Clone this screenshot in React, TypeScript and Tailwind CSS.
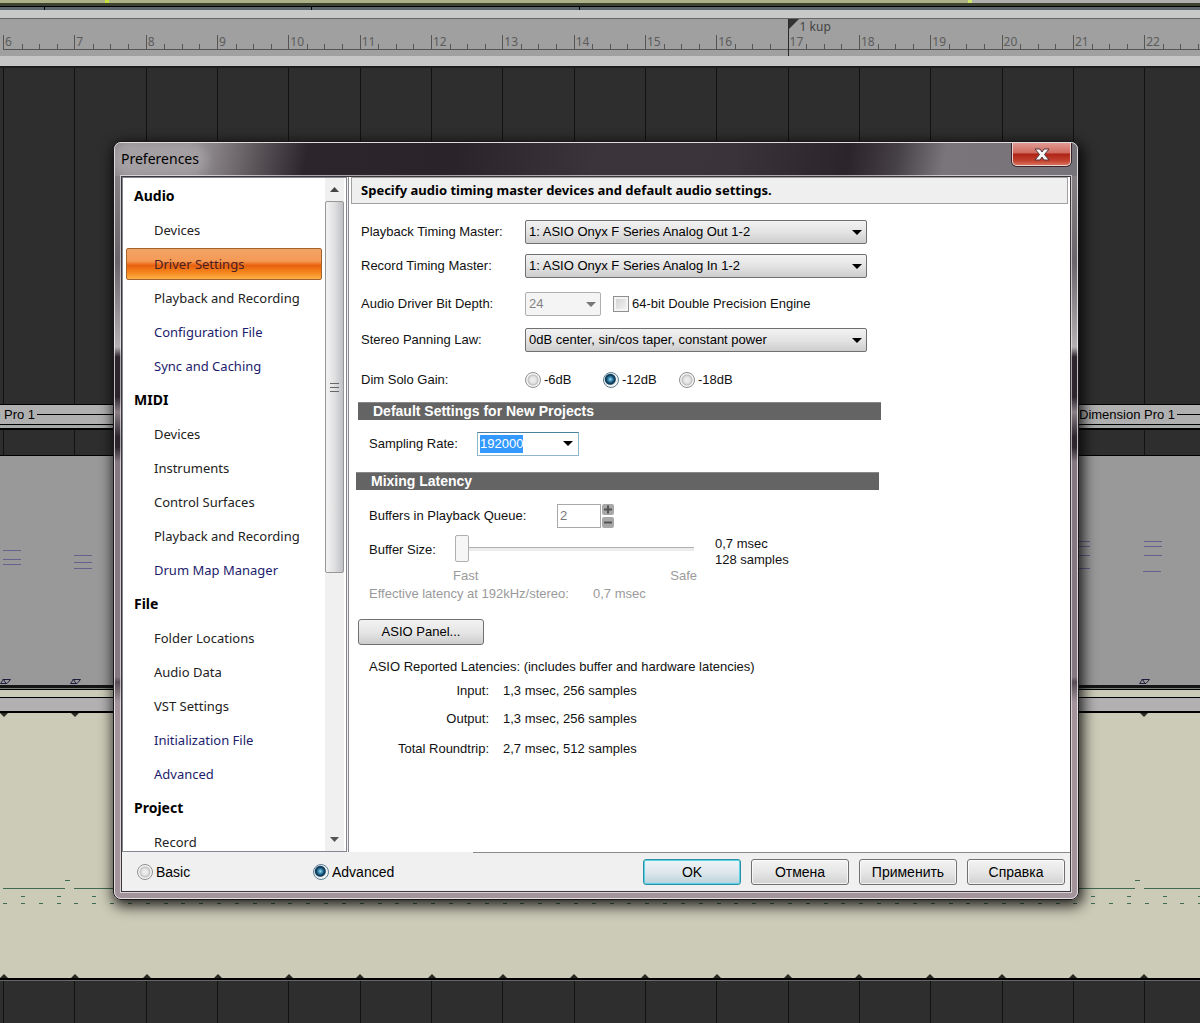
import { useEffect, useRef } from 'react'
import type { ReactNode } from 'react'
import { clsx } from 'clsx'

const measures = [6, 7, 8, 9, 10, 11, 12, 13, 14, 15, 16, 17, 18, 19, 20, 21, 22]

type NavEntry = { label: string; kind?: 'heading' | 'link' | 'active' }

const nav: NavEntry[] = [
  { label: 'Audio', kind: 'heading' },
  { label: 'Devices' },
  { label: 'Driver Settings', kind: 'active' },
  { label: 'Playback and Recording' },
  { label: 'Configuration File', kind: 'link' },
  { label: 'Sync and Caching', kind: 'link' },
  { label: 'MIDI', kind: 'heading' },
  { label: 'Devices' },
  { label: 'Instruments' },
  { label: 'Control Surfaces' },
  { label: 'Playback and Recording' },
  { label: 'Drum Map Manager', kind: 'link' },
  { label: 'File', kind: 'heading' },
  { label: 'Folder Locations' },
  { label: 'Audio Data' },
  { label: 'VST Settings' },
  { label: 'Initialization File', kind: 'link' },
  { label: 'Advanced', kind: 'link' },
  { label: 'Project', kind: 'heading' },
  { label: 'Record' },
]

/* ---------- timeline behind the dialog ---------- */

function Grid({ className }: { className: string }) {
  return (
    <div className={clsx('flex overflow-hidden bg-[#2e2e2e] pl-[3px]', className)}>
      {measures.map((m) => (
        <div key={m} className="w-[5.96%] shrink-0 border-l border-[#121212]" />
      ))}
    </div>
  )
}

function Ruler() {
  return (
    <div className="flex h-[37px] overflow-hidden bg-[#a0a0a0] pl-[3px]">
      {measures.map((m) => (
        <div key={m} className="relative w-[5.96%] shrink-0">
          {m === 17 && (
            <div className="absolute top-0 left-0 flex h-[37px] border-l border-[#2a2a2a]">
              <svg width="10" height="10" aria-hidden="true">
                <path d="M0 0H10L0 10Z" fill="#333" />
              </svg>
              <span className="pl-px text-xs whitespace-nowrap text-[#444]">1 kup</span>
            </div>
          )}
          <div className="mt-4 flex h-[15px] items-end border-b border-[#555]">
            <div className="h-3.5 flex-1 border-l border-[#555] pl-px text-xs leading-[14px] text-[#5c5c5c]">{m}</div>
            <div className="h-[5px] flex-1 border-l border-[#555]" />
            <div className="h-[5px] flex-1 border-l border-[#555]" />
            <div className="h-[5px] flex-1 border-l border-[#555]" />
          </div>
        </div>
      ))}
    </div>
  )
}

function Notches({ up }: { up?: boolean }) {
  return (
    <div className="flex h-1 overflow-hidden">
      {measures.map((m) => (
        <div key={m} className="w-[5.94%] shrink-0">
          <svg width="9" height="4" aria-hidden="true" className="block">
            <path d={up ? 'M0 4L4 0L8 4Z' : 'M0 0H8L4 4Z'} fill="#2a2a22" />
          </svg>
        </div>
      ))}
    </div>
  )
}

function MidiNotes() {
  const notes = [
    [3, 94], [3, 103], [3, 108],
    [74, 99], [74, 106], [74, 112],
    [1072, 85], [1072, 90], [1072, 99], [1072, 112],
    [1144, 85], [1144, 90], [1144, 99], [1143, 115],
  ]
  return (
    <svg className="block h-[229px] w-full bg-[#999]" aria-hidden="true">
      {notes.map(([x, y]) => (
        <rect key={`${x}-${y}`} x={x} y={y} width="18" height="1" fill="#62628c" />
      ))}
      {[0, 70, 1139].map((x) => (
        <path
          key={x}
          transform={`translate(${x} 223)`}
          d="M2.500 0.500H10.500L7 4.500H0.500L3.500 0.500L6 4.500"
          fill="none"
          stroke="#1c1c3c"
        />
      ))}
    </svg>
  )
}

function DrumHits() {
  const hits = Array.from({ length: 68 }, (_, i) => 3 + Math.round(i * 17.84))
  return (
    <svg className="block h-8 w-full" aria-hidden="true" fill="#3f6a52">
      <rect x="3" y="10" width="62" height="1" />
      <rect x="65" y="2" width="5" height="1" />
      <rect x="74" y="10" width="1061" height="1" />
      <rect x="1135" y="2" width="5" height="1" />
      <rect x="1144" y="10" width="800" height="1" />
      {hits.map((x, i) => (
        <g key={x}>
          <rect x={x} y="25" width="4" height="1" />
          {i % 2 === 1 && <rect x={x} y="18" width="4" height="1" />}
        </g>
      ))}
    </svg>
  )
}

function Timeline() {
  return (
    <div className="flex min-h-screen flex-col overflow-hidden bg-[#2e2e2e] font-['Noto_Sans',sans-serif]">
      <div className="flex h-[3px] bg-[#b0b0b0]">
        <div className="flex w-[81%] justify-between bg-[#acb188] pl-[105px]">
          <div className="w-1 bg-[#c4e03a]" />
          <div className="w-1 bg-[#d0e66a]" />
        </div>
      </div>
      <div className="h-[3px] bg-[#3d4230]" />
      <div className="h-px bg-black" />
      <div className="flex h-[3px] bg-[#5b676c] pl-[44px]">
        <div className="w-[23.2%] border-x border-black" />
        <div className="w-[23.2%] border-r border-black" />
      </div>
      <div className="h-2 bg-[#c8c8c8]" />
      <div className="h-px bg-[#666]" />
      <Ruler />
      <div className="h-[10px] bg-[#c6c6c6]" />
      <div className="h-0.5 bg-[#1c1c1c]" />
      <Grid className="h-[336px]" />
      <div className="flex h-[21px] items-center overflow-hidden border-y border-black bg-[#b0b0b0] font-['Liberation_Sans',sans-serif] text-[13px] text-black">
        {[0, 1].map((i) => (
          <div key={i} className={clsx('flex w-[95%] shrink-0 items-center gap-0.5', i === 0 && '-ml-[61px]')}>
            <span>Dimension Pro 1</span>
            <span className="h-px flex-1 bg-black" />
          </div>
        ))}
      </div>
      <div className="h-[3px] bg-[#a6aaa6]" />
      <div className="h-0.5 bg-black" />
      <Grid className="h-[25px]" />
      <div className="h-px bg-black" />
      <MidiNotes />
      <div className="h-[3px] bg-[#141414]" />
      <div className="h-px bg-[#7a8278]" />
      <div className="h-px bg-black" />
      <div className="h-[7px] bg-[#cccbb8]" />
      <div className="h-px bg-black" />
      <div className="h-[13px] bg-[#b2b0b0]" />
      <div className="h-0.5 bg-black" />
      <div className="flex h-[265px] flex-col justify-between bg-[#cccbb8]">
        <Notches />
        <div className="mt-24">
          <DrumHits />
        </div>
        <Notches up />
      </div>
      <div className="h-0.5 bg-black" />
      <div className="h-px bg-[#666]" />
      <Grid className="min-h-[42px] flex-1" />
    </div>
  )
}

/* ---------- form controls ---------- */

function Arrow({ className }: { className?: string }) {
  return (
    <svg width="10" height="5" viewBox="0 0 10 5" aria-hidden="true" className={className}>
      <path d="M0 0H10L5 5Z" fill="currentColor" />
    </svg>
  )
}

function Select({ id, value, disabled, className }: { id: string; value: string; disabled?: boolean; className: string }) {
  return (
    <div className={clsx('grid items-center', className)}>
      <select
        id={id}
        disabled={disabled}
        className="col-start-1 row-start-1 h-6 w-full appearance-none rounded-xs border border-[#707070] bg-linear-to-b from-[#f2f2f2] via-[#e4e4e4] to-[#cdcdcd] pl-[3px] text-[13px] text-black disabled:border-[#b0b0b0] disabled:bg-none disabled:bg-[#f4f4f4] disabled:text-[#838383] disabled:opacity-100"
      >
        <option>{value}</option>
      </select>
      <Arrow
        className={clsx(
          'pointer-events-none col-start-1 row-start-1 mr-[5px] justify-self-end',
          disabled ? 'text-[#777]' : 'text-black'
        )}
      />
    </div>
  )
}

function Radio({ name, label, checked, className }: { name: string; label: string; checked?: boolean; className?: string }) {
  return (
    <label className={clsx('flex items-center gap-[3px]', className)}>
      <input
        type="radio"
        name={name}
        defaultChecked={checked}
        className="size-4 shrink-0 appearance-none rounded-full border border-[#8e8f8f] bg-[radial-gradient(circle_at_50%_50%,#ececec_2px,#d8d8d8_4px,#bdbdbd_5px,#f6f6f6_6px)] checked:border-[#5d7f93] checked:bg-[radial-gradient(circle_at_45%_45%,#a8dcf0_0px,#3d8fb8_2px,#12405e_4px,#12405e_5px,#f2f2f2_6px)]"
      />
      {label}
    </label>
  )
}

function Row({ id, label, className, children }: { id: string; label: string; className?: string; children: ReactNode }) {
  return (
    <div className={clsx('flex items-center pl-[10px]', className)}>
      <label htmlFor={id} className="w-[164px] shrink-0">
        {label}
      </label>
      {children}
    </div>
  )
}

function SectionBar({ className, children }: { className: string; children: ReactNode }) {
  return (
    <h2
      className={clsx(
        'h-[18px] w-[523px] border-t border-[#888] bg-[#646464] pl-[15px] text-sm leading-[17px] font-bold text-white',
        className
      )}
    >
      {children}
    </h2>
  )
}

function DialogButton({ primary, children }: { primary?: boolean; children: ReactNode }) {
  return (
    <button
      type="button"
      className={clsx(
        'h-[26px] w-[98px] rounded-[3px] border bg-linear-to-b text-sm text-black',
        primary
          ? 'border-[#2f8fa3] from-[#eef4f6] via-[#dfe8ec] to-[#b9d3dd] inset-ring inset-ring-[#57d3ea]'
          : 'border-[#707070] from-[#f3f3f3] via-[#e6e6e6] to-[#d2d2d2] inset-ring inset-ring-white/70'
      )}
    >
      {children}
    </button>
  )
}

/* ---------- dialog ---------- */

function TitleBar() {
  return (
    <div className="flex h-[33px] items-start justify-between overflow-hidden rounded-t-md bg-[linear-gradient(100deg,#8f8a8e_0%,#8a8589_10%,#5a5459_15%,#2c252c_20%,#2a232a_35%,#3b343b_50%,#3a333a_64%,#2b242b_76%,#454045_81%,#79757a_86%,#77737a_100%)] pr-[6px] pl-[6px]">
      <div className="mt-1.5 rounded-full bg-white/20 leading-5 shadow-[0_0_10px_8px_rgba(255,255,255,0.2)]">
        <h1 className="font-['Noto_Sans',sans-serif] text-sm leading-5 text-black">Preferences</h1>
      </div>
      <button
        type="button"
        aria-label="Close"
        className="flex h-[23px] w-[59px] items-center justify-center rounded-b-[5px] border border-t-0 border-[#e8d4d4] bg-[linear-gradient(#e09a92_0%,#cf6a5e_45%,#ae2417_50%,#c2402e_80%,#d9705c_100%)] shadow-[0_0_0_1px_#3c2328]"
      >
        <svg width="16" height="13" viewBox="0 0 16 13" aria-hidden="true">
          <path
            d="M1 1H6L8 4L10 1H15L10.500 6.500L15 12H10L8 9L6 12H1L5.500 6.500Z"
            fill="#f7f7f7"
            stroke="#54343a"
          />
        </svg>
      </button>
    </div>
  )
}

function Sidebar() {
  return (
    <aside className="flex h-[675px] w-[225px] shrink-0 overflow-hidden border border-[#828790] bg-white">
      <nav className="flex flex-1 flex-col overflow-hidden px-[3px] pt-px font-['Noto_Sans',sans-serif] text-[13px]">
        {nav.map((n, i) =>
          n.kind === 'heading' ? (
            <h2 key={i} className="h-[34px] shrink-0 pl-2 text-sm leading-[34px] font-bold text-black">
              {n.label}
            </h2>
          ) : (
            <a
              key={i}
              href="#"
              className={clsx(
                'my-px block h-8 shrink-0 rounded-xs',
                n.kind === 'active'
                  ? 'border border-[#a4622c] bg-[linear-gradient(#f2a468_0%,#f59a55_40%,#e9610f_55%,#f68a1e_80%,#fdb04a_100%)] pl-[27px] leading-[30px] text-[#4a1f24]'
                  : 'pl-7 leading-8',
                n.kind === 'link' && 'text-[#1c1c6c]',
                !n.kind && 'text-[#222]'
              )}
            >
              {n.label}
            </a>
          )
        )}
      </nav>
      {/* scrollbar */}
      <div className="mr-[2px] flex w-[19px] flex-col items-center bg-[#f0f0f0]">
        <svg width="9" height="23" viewBox="0 0 9 23" aria-hidden="true">
          <path d="M0 14L4.500 9L9 14Z" fill="#444" />
        </svg>
        <div className="flex h-[372px] w-full items-center justify-center rounded-xs border border-[#979797] bg-linear-to-r from-[#f3f3f3] via-[#e0e0e2] to-[#c0c1c5]">
          <svg width="10" height="11" aria-hidden="true">
            <path d="M0 1.500H9M0 5.500H9M0 9.500H9" stroke="#666" />
          </svg>
        </div>
        <svg width="9" height="23" viewBox="0 0 9 23" aria-hidden="true" className="mt-auto">
          <path d="M0 9H9L4.500 14Z" fill="#555" />
        </svg>
      </div>
    </aside>
  )
}

function DriverSettings() {
  const rate = useRef<HTMLInputElement>(null)

  // the sampling rate is picked out when the page opens
  useEffect(() => {
    rate.current?.focus()
    rate.current?.select()
  }, [])

  return (
    <form className="flex min-w-0 flex-1 flex-col overflow-hidden border-l border-[#8a8a90] bg-white pr-[2px] pl-[2px] text-[13px] text-[#111]">
      <h2 className="h-[27px] border border-[#a0a0a0] bg-[#efefef] pl-[9px] font-['Noto_Sans',sans-serif] leading-[25px] font-bold text-black">
        Specify audio timing master devices and default audio settings.
      </h2>

      <Row id="playback" label="Playback Timing Master:" className="mt-4">
        <Select id="playback" value="1: ASIO Onyx F Series Analog Out 1-2" className="w-[342px]" />
      </Row>
      <Row id="record" label="Record Timing Master:" className="mt-[10px]">
        <Select id="record" value="1: ASIO Onyx F Series Analog In 1-2" className="w-[342px]" />
      </Row>
      <Row id="depth" label="Audio Driver Bit Depth:" className="mt-[14px]">
        <Select id="depth" value="24" disabled className="w-[76px]" />
        <label className="ml-3 flex items-center gap-[3px]">
          <input
            type="checkbox"
            className="size-4 appearance-none border border-[#8e8f8f] bg-linear-to-br from-[#cfcfcf] to-[#f6f6f6] inset-ring-2 inset-ring-[#f4f4f4]"
          />
          64-bit Double Precision Engine
        </label>
      </Row>
      <Row id="panning" label="Stereo Panning Law:" className="mt-3">
        <Select id="panning" value="0dB center, sin/cos taper, constant power" className="w-[342px]" />
      </Row>
      <fieldset className="mt-[18px] flex items-center pl-[10px]">
        <legend className="float-left w-[164px]">Dim Solo Gain:</legend>
        <Radio name="gain" label="-6dB" className="w-[78px]" />
        <Radio name="gain" label="-12dB" checked className="w-[76px]" />
        <Radio name="gain" label="-18dB" />
      </fieldset>

      <SectionBar className="mt-3 ml-[7px]">Default Settings for New Projects</SectionBar>
      <div className="mt-3 flex items-center pl-[18px]">
        <label htmlFor="rate" className="w-[108px]">
          Sampling Rate:
        </label>
        <div className="flex h-6 w-[102px] items-center border border-[#8fb5cc] border-t-[#4d7f9e] bg-white pr-[5px] pl-[2px]">
          <input
            id="rate"
            ref={rate}
            defaultValue="192000"
            className="h-[18px] w-0 flex-1 outline-none selection:bg-[#3399ff] selection:text-white"
          />
          <Arrow className="text-black" />
        </div>
      </div>

      <SectionBar className="mt-4 ml-[5px]">Mixing Latency</SectionBar>
      <div className="mt-[14px] flex items-center pl-[18px]">
        <label htmlFor="buffers" className="w-[188px]">
          Buffers in Playback Queue:
        </label>
        <input
          id="buffers"
          defaultValue="2"
          disabled
          className="h-6 w-11 border border-[#a8a8a8] bg-white pl-[2px] text-[#777]"
        />
        <div className="ml-px flex flex-col gap-0.5">
          {['M2 5.500H10M6 1.500V9.500', 'M2 5.500H10'].map((d, i) => (
            <button
              key={d}
              type="button"
              disabled
              aria-label={i === 0 ? 'Increase' : 'Decrease'}
              className="h-[11px] w-3 rounded-xs bg-[#a8a8a8]"
            >
              <svg width="12" height="11" aria-hidden="true">
                <path d={d} stroke="#555" strokeWidth="2" />
              </svg>
            </button>
          ))}
        </div>
      </div>

      <div className="mt-[8px] flex items-start pl-[18px]">
        <label htmlFor="size" className="w-[86px] leading-7">
          Buffer Size:
        </label>
        <input
          id="size"
          type="range"
          defaultValue="0"
          disabled
          className="h-[26px] w-[239px] appearance-none bg-transparent [&::-webkit-slider-runnable-track]:h-1 [&::-webkit-slider-runnable-track]:border-t [&::-webkit-slider-runnable-track]:border-[#b0b0b0] [&::-webkit-slider-runnable-track]:bg-[#ececec] [&::-webkit-slider-thumb]:-mt-[13px] [&::-webkit-slider-thumb]:h-[27px] [&::-webkit-slider-thumb]:w-[14px] [&::-webkit-slider-thumb]:appearance-none [&::-webkit-slider-thumb]:rounded-xs [&::-webkit-slider-thumb]:border [&::-webkit-slider-thumb]:border-[#b0b0b0] [&::-webkit-slider-thumb]:bg-[#f6f6f6]"
        />
        <p className="ml-[21px] leading-4">
          0,7 msec
          <br />
          128 samples
        </p>
      </div>
      <div className="ml-[102px] flex w-[244px] justify-between leading-4 text-[#9a9a9a]">
        <span>Fast</span>
        <span>Safe</span>
      </div>
      <p className="mt-[2px] flex pl-[18px] leading-4 text-[#9a9a9a]">
        <span className="w-[224px]">Effective latency at 192kHz/stereo:</span>0,7 msec
      </p>

      <button
        type="button"
        className="mt-[17px] ml-[7px] h-[26px] w-[126px] rounded-[3px] border border-[#707070] bg-linear-to-b from-[#f2f2f2] via-[#e6e6e6] to-[#cdcdcd] text-black"
      >
        ASIO Panel...
      </button>
      <p className="mt-3 pl-[18px] leading-5">ASIO Reported Latencies: (includes buffer and hardware latencies)</p>
      <dl className="grid grid-cols-[138px_1fr] gap-x-[14px] gap-y-2 pt-1 leading-5 [&>dt]:text-right">
        <dt>Input:</dt>
        <dd>1,3 msec, 256 samples</dd>
        <dt>Output:</dt>
        <dd>1,3 msec, 256 samples</dd>
        <dt className="pt-0.5">Total Roundtrip:</dt>
        <dd className="pt-0.5">2,7 msec, 512 samples</dd>
      </dl>
    </form>
  )
}

function Preferences() {
  return (
    <div
      role="dialog"
      aria-label="Preferences"
      className="w-full rounded-lg border border-[#1a161a] bg-[linear-gradient(#8f8a8e_0,#7d787c_60px,#6a656a_120px,#b5b0b4_205px,#2c252c_215px,#2c252c_255px,#8a8086_270px,#2c252c_295px,#2c252c_305px,#857881_320px,#857881_535px,#574d54_540px,#a3949c_560px,#a3949c_100%)] font-['Liberation_Sans',Arial,sans-serif] text-black shadow-[2px_4px_14px_2px_rgba(0,0,0,0.85)]"
    >
      <div className="rounded-[7px] border border-white/70">
        <TitleBar />
        <div className="mx-[6px] mb-[6px] border border-[#3d363c] bg-[#f0f0f0] outline outline-white/60">
          <div className="flex gap-px">
            <Sidebar />
            <DriverSettings />
          </div>
          <div className="flex h-[39px]">
            <div className="flex w-[351px] items-center pl-[15px] text-sm">
              <Radio name="mode" label="Basic" className="w-44" />
              <Radio name="mode" label="Advanced" checked />
            </div>
            <div className="flex flex-1 items-center justify-end gap-[10px] border-t border-[#8a8a8a] pr-[5px]">
              <DialogButton primary>OK</DialogButton>
              <DialogButton>Отмена</DialogButton>
              <DialogButton>Применить</DialogButton>
              <DialogButton>Справка</DialogButton>
            </div>
          </div>
        </div>
      </div>
    </div>
  )
}

export default function App() {
  return (
    <main className="relative">
      <Timeline />
      <div className="absolute inset-x-0 top-[141px] pr-[121px] pl-[113px]">
        <Preferences />
      </div>
    </main>
  )
}
